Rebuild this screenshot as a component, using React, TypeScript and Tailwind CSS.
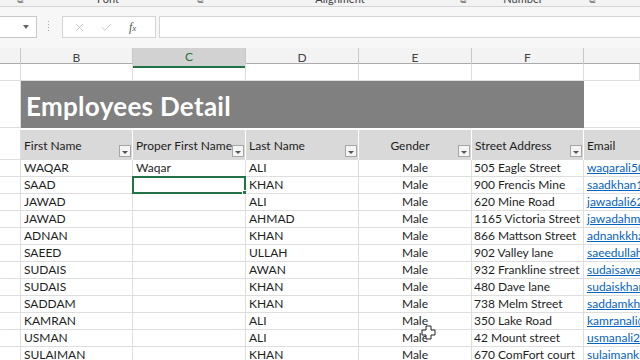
import { Check, X } from "lucide-react";

const cols = "grid grid-cols-[21px_112px_113px_113px_113px_112px_56px]";

interface Employee {
  first: string;
  proper: string;
  last: string;
  gender: string;
  street: string;
  email: string;
}

const rows: Employee[] = [
  { first: "WAQAR", proper: "Waqar", last: "ALI", gender: "Male", street: "505 Eagle Street", email: "waqarali505@gmail.com" },
  { first: "SAAD", proper: "", last: "KHAN", gender: "Male", street: "900 Frencis Mine", email: "saadkhan123@gmail.com" },
  { first: "JAWAD", proper: "", last: "ALI", gender: "Male", street: "620 Mine Road", email: "jawadali620@gmail.com" },
  { first: "JAWAD", proper: "", last: "AHMAD", gender: "Male", street: "1165 Victoria Street", email: "jawadahmad@gmail.com" },
  { first: "ADNAN", proper: "", last: "KHAN", gender: "Male", street: "866 Mattson Street", email: "adnankkhan@gmail.com" },
  { first: "SAEED", proper: "", last: "ULLAH", gender: "Male", street: "902 Valley lane", email: "saeedullah@gmail.com" },
  { first: "SUDAIS", proper: "", last: "AWAN", gender: "Male", street: "932 Frankline street", email: "sudaisawan@gmail.com" },
  { first: "SUDAIS", proper: "", last: "KHAN", gender: "Male", street: "480 Dave lane", email: "sudaiskhan@gmail.com" },
  { first: "SADDAM", proper: "", last: "KHAN", gender: "Male", street: "738 Melm Street", email: "saddamkhan@gmail.com" },
  { first: "KAMRAN", proper: "", last: "ALI", gender: "Male", street: "350 Lake Road", email: "kamranali@gmail.com" },
  { first: "USMAN", proper: "", last: "ALI", gender: "Male", street: "42 Mount street", email: "usmanali22@gmail.com" },
  { first: "SULAIMAN", proper: "", last: "KHAN", gender: "Male", street: "670 ComFort court", email: "sulaimankhan@gmail.com" },
];

function FilterButton() {
  return (
    <span className="mb-[3px] mr-[1px] flex h-[12px] w-[12px] shrink-0 items-center justify-center border border-[#a6a6a6] bg-[#f4f4f4]">
      <span className="mt-[2px] h-0 w-0 border-x-[3px] border-t-[3px] border-x-transparent border-t-[#555]" />
    </span>
  );
}

function HeaderCell({ label, center }: { label: string; center?: boolean }) {
  return (
    <div className="flex items-end overflow-hidden whitespace-nowrap border-r border-white bg-[#d9d9d9] pl-[3px]">
      <span className={`mb-[5px] flex-1 overflow-hidden ${center ? "text-center" : ""}`}>{label}</span>
      <FilterButton />
    </div>
  );
}

function Launcher() {
  return <span className="text-[9px] text-[#888]">⧉</span>;
}

export default function App() {
  return (
    <div className="relative h-[360px] w-[640px] overflow-hidden bg-white font-['Lato',sans-serif] text-[12px] text-[#1e1e1e]">
      {/* ribbon group labels, cut off at the top */}
      <div className="h-[7px] overflow-hidden border-b border-[#d6d6d6] bg-[#f3f3f3] text-[11px] text-[#444]">
        <div className="-mt-[9px] flex h-[16px] items-center whitespace-nowrap">
          <span className="w-[40px] text-center"><Launcher /></span>
          <span className="w-[136px] text-center">Font</span>
          <span className="w-[48px] text-center"><Launcher /></span>
          <span className="w-[232px] text-center">Alignment</span>
          <span className="w-[14px] text-center"><Launcher /></span>
          <span className="w-[106px] text-center">Number</span>
          <span className="w-[32px] text-center"><Launcher /></span>
        </div>
      </div>

      {/* formula bar */}
      <div className="flex h-[41px] items-start bg-[#f7f7f7] pt-[9px]">
        <div className="flex h-[22px] w-[37px] items-center justify-end border border-l-0 border-[#c8c8c8] bg-white pr-[7px]">
          <span className="h-0 w-0 border-x-[3px] border-t-[4px] border-x-transparent border-t-[#666]" />
        </div>
        <div className="ml-[11px] mt-[5px] flex flex-col gap-[2px]">
          <span className="h-[1px] w-[1px] bg-[#aaa]" />
          <span className="h-[1px] w-[1px] bg-[#aaa]" />
          <span className="h-[1px] w-[1px] bg-[#aaa]" />
          <span className="h-[1px] w-[1px] bg-[#aaa]" />
        </div>
        <div className="ml-[13px] flex h-[22px] w-[94px] items-center border border-[#d4d4d4] bg-white">
          <X className="ml-[10px] h-[13px] w-[13px] text-[#c4c4c4]" strokeWidth={1.6} />
          <Check className="ml-[14px] h-[13px] w-[13px] text-[#c4c4c4]" strokeWidth={1.6} />
          <span className="ml-[16px] font-['Liberation_Serif',serif] text-[12px] italic text-[#555]">
            f<span className="text-[9px]">x</span>
          </span>
        </div>
        <div className="ml-[3px] h-[22px] flex-1 border border-r-0 border-[#d4d4d4] bg-white" />
      </div>

      {/* column letters */}
      <div className={`${cols} h-[16px] border-b border-[#ababab] bg-[#f3f3f3] text-[12px] text-[#444]`}>
        <div className="border-r border-[#c8c8c8]" />
        <div className="flex items-center justify-center border-r border-[#c8c8c8]">B</div>
        <div className="flex items-center justify-center border-b-2 border-r border-[#217346] border-r-[#c8c8c8] bg-[#d2d2d2] text-[#217346]">C</div>
        <div className="flex items-center justify-center border-r border-[#c8c8c8]">D</div>
        <div className="flex items-center justify-center border-r border-[#c8c8c8]">E</div>
        <div className="flex items-center justify-center border-r border-[#c8c8c8]">F</div>
        <div />
      </div>

      {/* row 1, empty */}
      <div className={`${cols} h-[17px]`}>
        {Array.from({ length: 7 }).map((_, i) => (
          <div key={i} className="border-b border-r border-[#dedede]" />
        ))}
      </div>

      {/* title row */}
      <div className={`${cols} h-[47px]`}>
        <div className="border-b border-r border-[#dedede]" />
        <div className="col-span-5 flex items-center overflow-visible whitespace-nowrap bg-[#808080] pl-[5px] pt-[3px] text-[26px] font-bold tracking-[0.3px] text-white">
          Employees Detail
        </div>
        <div className="border-b border-[#dedede]" />
      </div>

      {/* table header row */}
      <div className={`${cols} h-[32px] border-t-2 border-white`}>
        <div className="border-b border-r border-[#dedede]" />
        <HeaderCell label="First Name" />
        <HeaderCell label="Proper First Name" />
        <HeaderCell label="Last Name" />
        <HeaderCell label="Gender" center />
        <HeaderCell label="Street Address" />
        <div className="flex items-end whitespace-nowrap bg-[#d9d9d9] pl-[3px]">
          <span className="mb-[5px]">Email</span>
        </div>
      </div>

      {/* data rows */}
      {rows.map((r, i) => (
        <div key={i} className={`${cols} h-[17px] leading-[16px]`}>
          <div className="border-b border-r border-[#dedede]" />
          <div className="overflow-hidden whitespace-nowrap border-b border-r border-[#dedede] pl-[3px]">{r.first}</div>
          <div
            className={
              i === 1
                ? "relative -ml-[1px] -mt-[1px] h-[18px] border-2 border-[#217346]"
                : "overflow-hidden whitespace-nowrap border-b border-r border-[#dedede] pl-[3px]"
            }
          >
            {i === 1 ? (
              <span className="absolute -bottom-[3px] -right-[3px] h-[5px] w-[5px] border border-white bg-[#217346]" />
            ) : (
              r.proper
            )}
          </div>
          <div className="overflow-hidden whitespace-nowrap border-b border-r border-[#dedede] pl-[3px]">{r.last}</div>
          <div className="overflow-hidden whitespace-nowrap border-b border-r border-[#dedede] text-center">{r.gender}</div>
          <div className="overflow-hidden whitespace-nowrap border-b border-r border-[#dedede] pl-[2px]">{r.street}</div>
          <div className="overflow-hidden whitespace-nowrap border-b border-[#dedede] pl-[3px] text-[#0563c1] underline">
            {r.email}
          </div>
        </div>
      ))}

      {/* excel cell cursor */}
      <svg className="absolute left-[421px] top-[325px]" width="15" height="15" viewBox="0 0 15 15">
        <path d="M5 1h5v4h4v5h-4v4H5v-4H1V5h4z" fill="white" stroke="#222" strokeWidth="1" />
      </svg>
    </div>
  );
}
